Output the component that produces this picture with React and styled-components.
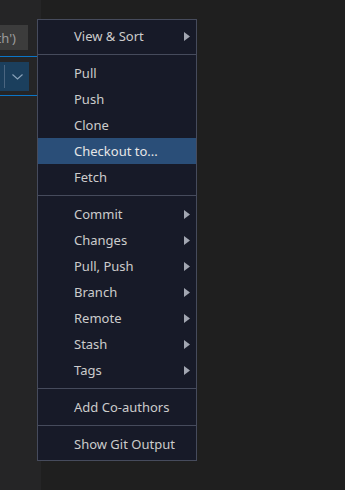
import React from "react";
import styled, { createGlobalStyle } from "styled-components";

const Global = createGlobalStyle`
  html, body { margin: 0; padding: 0; background: #1f1f1f; }
  #root { width: 345px; height: 490px; }
  * { box-sizing: border-box; }
`;

const Frame = styled.div`
  position: relative;
  display: flex;
  width: 345px;
  height: 490px;
  overflow: hidden;
  font-family: "Noto Sans", "Open Sans", sans-serif;
`;

const Sidebar = styled.div`
  width: 41px;
  background: #252526;
  display: flex;
  flex-direction: column;
  padding-top: 25px;
`;

const Editor = styled.div`
  flex: 1;
  background: #1f1f1f;
`;

const InputBox = styled.div`
  width: 28px;
  height: 25px;
  background: #3c3c3c;
  overflow: hidden;
  display: flex;
  align-items: center;
  justify-content: flex-end;
  padding-right: 12px;
  white-space: nowrap;
  font-size: 13px;
  color: #9d9d9d;
`;

const FocusLine = styled.div`
  height: 1px;
  background: #0b75c7;
  margin-top: ${(p) => p.$top}px;
`;

const SplitButton = styled.div`
  margin-top: 5px;
  width: 29px;
  height: 29px;
  background: #1b3f5d;
  display: flex;
  align-items: center;
  padding-left: 4px;
  gap: 7px;
`;

const Divider = styled.div`
  width: 1px;
  height: 23px;
  background: #4a6580;
`;

const Menu = styled.div`
  position: absolute;
  left: 37px;
  top: 19px;
  width: 160px;
  background: #171a28;
  border: 1px solid #464b5c;
  padding: 3px 0;
  display: flex;
  flex-direction: column;
`;

const Item = styled.div`
  height: 26px;
  display: flex;
  align-items: center;
  padding-left: 36px;
  padding-right: 6px;
  font-size: 13px;
  color: ${(p) => (p.$active ? "#e6e6e6" : "#cccccc")};
  background: ${(p) => (p.$active ? "#2a4e78" : "transparent")};
  white-space: nowrap;
`;

const Label = styled.span`
  flex: 1;
`;

const Separator = styled.div`
  height: 1px;
  margin: 5px 0;
  background: #464b5c;
`;

const Arrow = () => (
  <svg width="6" height="9" viewBox="0 0 6 9">
    <polygon points="0,0 6,4.5 0,9" fill="#a2a6b1" />
  </svg>
);

const Chevron = () => (
  <svg width="11" height="6" viewBox="0 0 11 6">
    <polyline points="0.5,0.5 5.5,5 10.5,0.5" fill="none" stroke="#8aa3ba" strokeWidth="1.1" />
  </svg>
);

const groups = [
  [{ label: "View & Sort", sub: true }],
  [
    { label: "Pull" },
    { label: "Push" },
    { label: "Clone" },
    { label: "Checkout to...", active: true },
    { label: "Fetch" },
  ],
  [
    { label: "Commit", sub: true },
    { label: "Changes", sub: true },
    { label: "Pull, Push", sub: true },
    { label: "Branch", sub: true },
    { label: "Remote", sub: true },
    { label: "Stash", sub: true },
    { label: "Tags", sub: true },
  ],
  [{ label: "Add Co-authors" }],
  [{ label: "Show Git Output" }],
];

export default function App() {
  return (
    <>
      <Global />
      <Frame>
        <Sidebar>
          <InputBox>Message (Ctrl+Enter to commit on 'feature/auth')</InputBox>
          <FocusLine $top={6} />
          <SplitButton>
            <Divider />
            <Chevron />
          </SplitButton>
          <FocusLine $top={4} />
        </Sidebar>
        <Editor />
        <Menu>
          {groups.map((g, gi) => (
            <React.Fragment key={gi}>
              {gi > 0 && <Separator />}
              {g.map((it) => (
                <Item key={it.label} $active={it.active}>
                  <Label>{it.label}</Label>
                  {it.sub && <Arrow />}
                </Item>
              ))}
            </React.Fragment>
          ))}
        </Menu>
      </Frame>
    </>
  );
}
